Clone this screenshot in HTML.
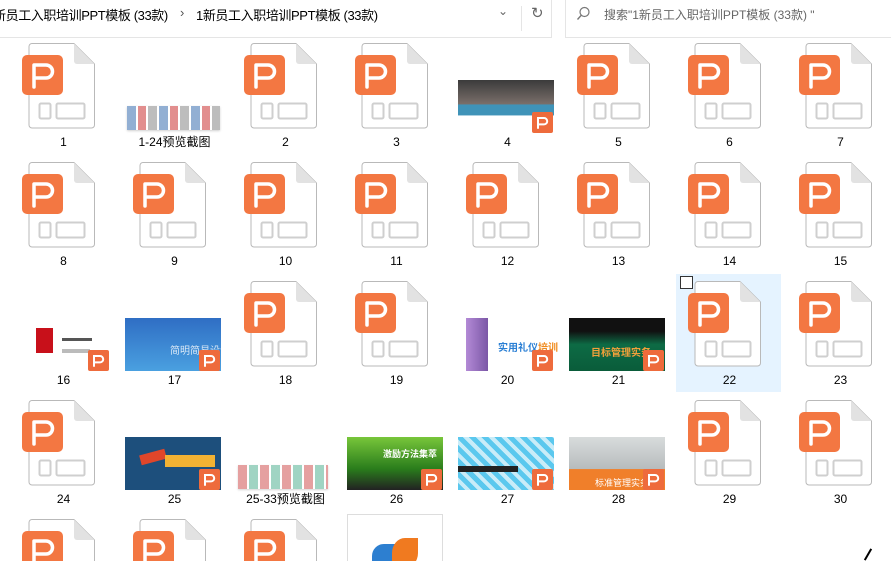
<!DOCTYPE html>
<html><head><meta charset="utf-8"><style>
html,body{margin:0;width:891px;height:561px;overflow:hidden;background:#fff;}
body{font-family:"Liberation Sans","Noto Sans CJK SC",sans-serif;}
#w{position:relative;width:891px;height:561px;overflow:hidden;}
.a{position:absolute;}
.ic{position:absolute;width:76px;height:90px;}
.l{position:absolute;width:111px;text-align:center;font-size:12px;color:#000;line-height:14px;}
.t{position:absolute;width:96px;height:53px;}
.b{position:absolute;width:21px;height:21px;}
</style></head><body><div id="w">
<svg width="0" height="0" style="position:absolute">
<defs>
<symbol id="ic" viewBox="0 0 76 90">
<path d="M10 0.5 H52 L72.5 21 V82 a3 3 0 0 1 -3 3 H10 a3 3 0 0 1 -3 -3 V3.5 a3 3 0 0 1 3 -3z" fill="#fff" stroke="#b9b9b9"/>
<path d="M52 0.5 V18 a3 3 0 0 0 3 3 H72.5z" fill="#e2e2e2"/>
<rect x="17.5" y="60.5" width="11" height="15" rx="1.5" fill="none" stroke="#cfcfcf" stroke-width="2"/>
<rect x="34.5" y="60.5" width="28" height="15" rx="1.5" fill="none" stroke="#cfcfcf" stroke-width="2"/>
<rect x="0" y="12" width="41" height="40" rx="5" fill="#f37742"/>
<path d="M12 44 V22 H24 a6.5 6.5 0 0 1 0 13 H13" fill="none" stroke="#fff" stroke-width="3.5" stroke-linecap="round" stroke-linejoin="round"/>
</symbol>
<symbol id="bd" viewBox="0 0 21 21">
<rect width="21" height="21" rx="2" fill="#ee6b3c"/>
<path d="M6 16 V6 H12 a3.2 3.2 0 0 1 0 6.4 H6.5" fill="none" stroke="#fff" stroke-width="2" stroke-linecap="round"/>
</symbol>
</defs></svg>

<div class="a" style="left:0;top:0;width:551px;height:37px;border-bottom:1px solid #e5e5e5;border-right:1px solid #e5e5e5"></div>
<div class="a" style="left:-7px;top:5px;font-size:13px;color:#000;white-space:nowrap;letter-spacing:-0.4px">新员工入职培训PPT模板 (33款)</div>
<div class="a" style="left:180px;top:5px;font-size:13px;color:#555">›</div>
<div class="a" style="left:196px;top:5px;font-size:13px;color:#000;white-space:nowrap;letter-spacing:-0.4px">1新员工入职培训PPT模板 (33款)</div>
<div class="a" style="left:498px;top:4px;font-size:12px;color:#666">⌄</div>
<div class="a" style="left:521px;top:6px;width:1px;height:25px;background:#e5e5e5"></div>
<div class="a" style="left:531px;top:4px;font-size:15px;color:#666">↻</div>
<div class="a" style="left:565px;top:0;width:330px;height:37px;border-bottom:1px solid #e5e5e5;border-left:1px solid #e5e5e5"></div>
<svg class="a" style="left:576px;top:6px" width="14" height="16"><circle cx="8.5" cy="6" r="4.5" fill="none" stroke="#777" stroke-width="1.2"/><path d="M5.3 9.2 L1.5 13.5" stroke="#777" stroke-width="1.4"/></svg>
<div class="a" style="left:604px;top:6px;font-size:12px;color:#666;white-space:nowrap">搜索"1新员工入职培训PPT模板 (33款) "</div>

<div class="a" style="left:676px;top:274px;width:105px;height:118px;background:#e5f3ff"></div>
<div class="a" style="left:680px;top:276px;width:11px;height:11px;border:1px solid #333;background:#fff"></div>

<svg class="ic" style="left:22px;top:43px"><use href="#ic"/></svg>
<div class="a" style="left:127px;top:106px;width:93px;height:24px;background:repeating-linear-gradient(90deg,#3a6fb0 0 9px,#fff 9px 11px,#c33 11px 19px,#fff 19px 21px,#888 21px 30px,#fff 30px 32px);opacity:.55;box-shadow:0 1px 2px #aaa"></div>
<svg class="ic" style="left:244px;top:43px"><use href="#ic"/></svg>
<svg class="ic" style="left:355px;top:43px"><use href="#ic"/></svg>
<div class="t" style="left:458px;top:80px;height:44px;background:linear-gradient(180deg,#3b3b3b 0,#7a6f6a 55%,#3f93b8 56%,#3f93b8 80%,#fff 81%)"></div>
<svg class="b" style="left:532px;top:112px"><use href="#bd"/></svg>
<svg class="ic" style="left:577px;top:43px"><use href="#ic"/></svg>
<svg class="ic" style="left:688px;top:43px"><use href="#ic"/></svg>
<svg class="ic" style="left:799px;top:43px"><use href="#ic"/></svg>
<div class="l" style="left:8px;top:135px">1</div>
<div class="l" style="left:119px;top:135px">1-24预览截图</div>
<div class="l" style="left:230px;top:135px">2</div>
<div class="l" style="left:341px;top:135px">3</div>
<div class="l" style="left:452px;top:135px">4</div>
<div class="l" style="left:563px;top:135px">5</div>
<div class="l" style="left:674px;top:135px">6</div>
<div class="l" style="left:785px;top:135px">7</div>

<svg class="ic" style="left:22px;top:162px"><use href="#ic"/></svg>
<svg class="ic" style="left:133px;top:162px"><use href="#ic"/></svg>
<svg class="ic" style="left:244px;top:162px"><use href="#ic"/></svg>
<svg class="ic" style="left:355px;top:162px"><use href="#ic"/></svg>
<svg class="ic" style="left:466px;top:162px"><use href="#ic"/></svg>
<svg class="ic" style="left:577px;top:162px"><use href="#ic"/></svg>
<svg class="ic" style="left:688px;top:162px"><use href="#ic"/></svg>
<svg class="ic" style="left:799px;top:162px"><use href="#ic"/></svg>
<div class="l" style="left:8px;top:254px">8</div>
<div class="l" style="left:119px;top:254px">9</div>
<div class="l" style="left:230px;top:254px">10</div>
<div class="l" style="left:341px;top:254px">11</div>
<div class="l" style="left:452px;top:254px">12</div>
<div class="l" style="left:563px;top:254px">13</div>
<div class="l" style="left:674px;top:254px">14</div>
<div class="l" style="left:785px;top:254px">15</div>

<div class="a" style="left:36px;top:328px;width:17px;height:25px;background:#c8101a"></div>
<div class="a" style="left:62px;top:338px;width:30px;height:3px;background:#555"></div>
<div class="a" style="left:62px;top:349px;width:28px;height:4px;background:#bbb"></div>
<svg class="b" style="left:88px;top:350px"><use href="#bd"/></svg>
<div class="t" style="left:125px;top:318px;background:linear-gradient(180deg,#2f6ec4,#4aa0e0)"></div>
<div class="a" style="left:170px;top:342px;font-size:10px;color:#fff;opacity:.8">简明简易设计</div>
<svg class="b" style="left:199px;top:350px"><use href="#bd"/></svg>
<svg class="ic" style="left:244px;top:281px"><use href="#ic"/></svg>
<svg class="ic" style="left:355px;top:281px"><use href="#ic"/></svg>
<div class="a" style="left:466px;top:318px;width:22px;height:53px;background:linear-gradient(90deg,#b38ad6,#7b57a6)"></div>
<div class="a" style="left:498px;top:339px;font-size:10px;font-weight:bold;color:#2a7fd4;white-space:nowrap">实用礼仪<span style="color:#f08a1c">培训</span></div>
<svg class="b" style="left:532px;top:350px"><use href="#bd"/></svg>
<div class="t" style="left:569px;top:318px;background:linear-gradient(180deg,#111 0,#111 25%,#0d6b45 50%,#0a5c3a)"></div>
<div class="a" style="left:591px;top:344px;font-size:10px;font-weight:bold;color:#f2a03a">目标管理实务</div>
<svg class="b" style="left:643px;top:350px"><use href="#bd"/></svg>
<svg class="ic" style="left:688px;top:281px"><use href="#ic"/></svg>
<svg class="ic" style="left:799px;top:281px"><use href="#ic"/></svg>
<div class="l" style="left:8px;top:373px">16</div>
<div class="l" style="left:119px;top:373px">17</div>
<div class="l" style="left:230px;top:373px">18</div>
<div class="l" style="left:341px;top:373px">19</div>
<div class="l" style="left:452px;top:373px">20</div>
<div class="l" style="left:563px;top:373px">21</div>
<div class="l" style="left:674px;top:373px">22</div>
<div class="l" style="left:785px;top:373px">23</div>

<svg class="ic" style="left:22px;top:400px"><use href="#ic"/></svg>
<div class="t" style="left:125px;top:437px;background:#1d4f7c"></div>
<div class="a" style="left:140px;top:452px;width:26px;height:10px;background:#e0462a;transform:rotate(-15deg)"></div>
<div class="a" style="left:165px;top:455px;width:50px;height:12px;background:#f2b233"></div>
<svg class="b" style="left:199px;top:469px"><use href="#bd"/></svg>
<div class="a" style="left:238px;top:465px;width:90px;height:24px;background:repeating-linear-gradient(90deg,#c44 0 9px,#fff 9px 11px,#4a8 11px 20px,#fff 20px 22px);opacity:.5;box-shadow:0 1px 2px #aaa"></div>
<div class="t" style="left:347px;top:437px;background:linear-gradient(180deg,#78c63a,#2a7d1c 60%,#222)"></div>
<div class="a" style="left:383px;top:447px;font-size:9px;color:#fff;font-weight:bold">激励方法集萃</div>
<svg class="b" style="left:421px;top:469px"><use href="#bd"/></svg>
<div class="t" style="left:458px;top:437px;background:repeating-linear-gradient(45deg,#5bc8ee 0 5px,#c9ecf8 5px 9px)"></div>
<div class="a" style="left:458px;top:466px;width:60px;height:6px;background:#222"></div>
<svg class="b" style="left:532px;top:469px"><use href="#bd"/></svg>
<div class="t" style="left:569px;top:437px;background:linear-gradient(180deg,#d8dcdc,#b7bcbd 60%,#f07f2a 61%)"></div>
<div class="a" style="left:595px;top:476px;font-size:9px;color:#fff">标准管理实务</div>
<svg class="b" style="left:643px;top:469px"><use href="#bd"/></svg>
<svg class="ic" style="left:688px;top:400px"><use href="#ic"/></svg>
<svg class="ic" style="left:799px;top:400px"><use href="#ic"/></svg>
<div class="l" style="left:8px;top:492px">24</div>
<div class="l" style="left:119px;top:492px">25</div>
<div class="l" style="left:230px;top:492px">25-33预览截图</div>
<div class="l" style="left:341px;top:492px">26</div>
<div class="l" style="left:452px;top:492px">27</div>
<div class="l" style="left:563px;top:492px">28</div>
<div class="l" style="left:674px;top:492px">29</div>
<div class="l" style="left:785px;top:492px">30</div>

<svg class="ic" style="left:22px;top:519px;height:42px" viewBox="0 0 76 42"><use href="#ic" width="76" height="90"/></svg>
<svg class="ic" style="left:133px;top:519px;height:42px" viewBox="0 0 76 42"><use href="#ic" width="76" height="90"/></svg>
<svg class="ic" style="left:244px;top:519px;height:42px" viewBox="0 0 76 42"><use href="#ic" width="76" height="90"/></svg>
<div class="a" style="left:347px;top:514px;width:94px;height:47px;border:1px solid #ddd;border-bottom:0;background:#fff;overflow:hidden">
<div class="a" style="left:24px;top:29px;width:24px;height:24px;border-radius:50% 0;background:#2d7fd0"></div>
<div class="a" style="left:44px;top:23px;width:26px;height:30px;border-radius:50% 0;background:#f07a20"></div>
</div>
<div class="a" style="left:867px;top:548px;width:2px;height:13px;background:#000;transform:rotate(30deg)"></div>
</div></body></html>
